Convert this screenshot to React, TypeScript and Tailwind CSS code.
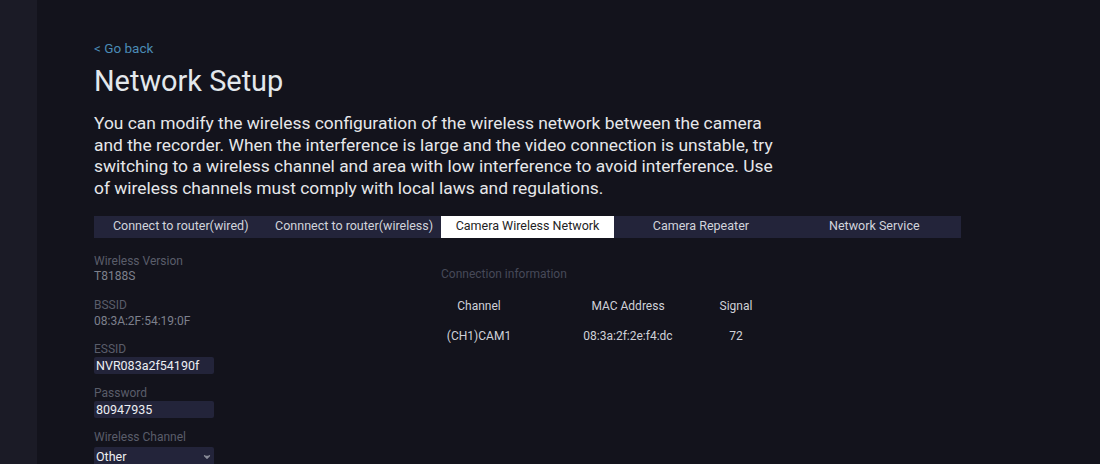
import { ChevronDown } from 'lucide-react';

const tabs = [
  'Connect to router(wired)',
  'Connnect to router(wireless)',
  'Camera Wireless Network',
  'Camera Repeater',
  'Network Service',
];

const intro = [
  'You can modify the wireless configuration of the wireless network between the camera',
  'and the recorder. When the interference is large and the video connection is unstable, try',
  'switching to a wireless channel and area with low interference to avoid interference. Use',
  'of wireless channels must comply with local laws and regulations.',
];

const clients = [{ channel: '(CH1)CAM1', mac: '08:3a:2f:2e:f4:dc', signal: 72 }];

function Field({ label, children }: { label: string; children: React.ReactNode }) {
  return (
    <div className="mb-[12px]">
      <p className="text-[12px] leading-[15px] text-[#5a5d6a]">{label}</p>
      {children}
    </div>
  );
}

export default function App() {
  return (
    <div
      className="flex h-[464px] w-[1100px] overflow-hidden bg-[#13131c]"
      style={{ fontFamily: 'Roboto, "Noto Sans", sans-serif' }}
    >
      <aside className="w-[37px] shrink-0 bg-[#1b1b26]" />

      <main className="flex-1 pl-[57px] pt-[36px]">
        <button className="text-[13.5px] leading-[16px] text-[#4b8bb5]">&lt; Go back</button>
        <h1 className="mt-[4px] text-[28.9px] leading-[34px] text-[#e3e8ec]">Network Setup</h1>
        <p className="mt-[15px] whitespace-nowrap text-[17.4px] leading-[21.7px] text-[#e6e7ea]">
          {intro.map((line) => (
            <span key={line} className="block">
              {line}
            </span>
          ))}
        </p>

        {/* Tabs */}
        <div className="mt-[16px] flex w-[867px] bg-[#23243a]">
          {tabs.map((tab, i) => (
            <div
              key={tab}
              className={`flex h-[22px] flex-1 items-center justify-center text-[12.5px] ${
                i === 2 ? 'bg-white text-[#1e1e24]' : 'text-[#d2d4dc]'
              }`}
            >
              {tab}
            </div>
          ))}
        </div>

        <div className="mt-[16px] flex">
          {/* Wireless settings */}
          <div className="w-[347px]">
            <Field label="Wireless Version">
              <p className="pb-[2px] text-[12px] leading-[15px] text-[#7d808c]">T8188S</p>
            </Field>
            <Field label="BSSID">
              <p className="text-[12px] leading-[17px] text-[#7d808c]">08:3A:2F:54:19:0F</p>
            </Field>
            <Field label="ESSID">
              <div className="h-[17px] w-[120px] rounded-[2px] bg-[#23243a] px-[2px] text-[12.5px] leading-[17px] text-[#eceef2]">
                NVR083a2f54190f
              </div>
            </Field>
            <Field label="Password">
              <div className="h-[17px] w-[120px] rounded-[2px] bg-[#23243a] px-[2px] text-[12.5px] leading-[17px] text-[#eceef2]">
                80947935
              </div>
            </Field>
            <Field label="Wireless Channel">
              <div className="mt-[2px] flex h-[20px] w-[120px] items-center justify-between rounded-[2px] bg-[#23243a] px-[2px] text-[12.5px] text-[#eceef2]">
                <span className="pt-[2px]">Other</span>
                <ChevronDown className="h-[10px] w-[10px] fill-[#8a8d99] text-[#8a8d99]" strokeWidth={3} />
              </div>
            </Field>
          </div>

          {/* Connected cameras */}
          <div className="pt-[13px]">
            <p className="text-[12px] leading-[15px] text-[#464958]">Connection information</p>
            <div className="mt-[17px] flex text-[12px] leading-[15px] text-[#cfd1d8]">
              <span className="w-[76px] text-center">Channel</span>
              <span className="ml-[36px] w-[150px] text-center">MAC Address</span>
              <span className="w-[66px] text-center">Signal</span>
            </div>
            {clients.map((c) => (
              <div key={c.mac} className="mt-[15px] flex text-[12px] leading-[15px] text-[#cfd1d8]">
                <span className="w-[76px] text-center">{c.channel}</span>
                <span className="ml-[36px] w-[150px] text-center">{c.mac}</span>
                <span className="w-[66px] text-center">{c.signal}</span>
              </div>
            ))}
          </div>
        </div>
      </main>
    </div>
  );
}
